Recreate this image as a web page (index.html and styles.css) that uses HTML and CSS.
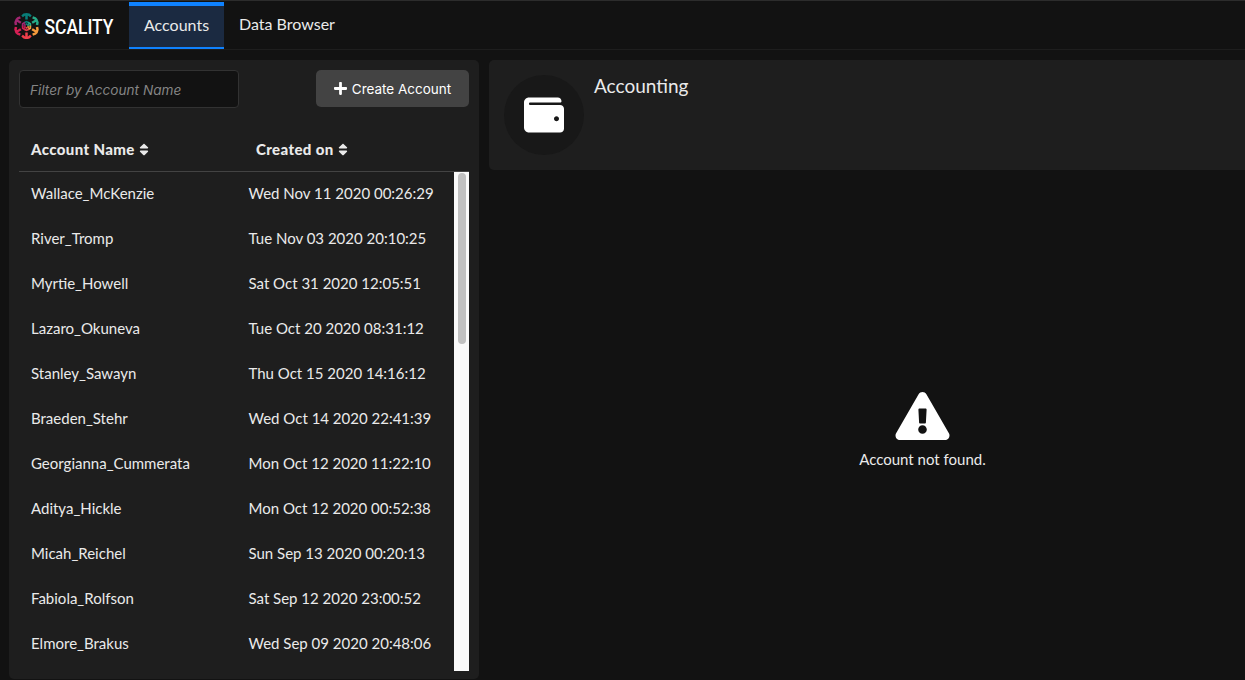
FILE: index.html
```
<!DOCTYPE html>
<html lang="en">
<head>
<meta charset="utf-8">
<title>Scality - Accounts</title>
<link rel="stylesheet" href="styles.css">
</head>
<body>
<svg class="defs" aria-hidden="true">
  <symbol id="sort" viewBox="0 0 320 512"><path d="M41 288h238c21.400 0 32.100 25.900 17 41L177 448c-9.400 9.400-24.600 9.400-33.900 0L24 329c-15.100-15.100-4.400-41 17-41zm255-105L177 64c-9.400-9.400-24.600-9.400-33.900 0L24 183c-15.100 15.100-4.400 41 17 41h238c21.400 0 32.100-25.900 17-41z"/></symbol>
  <symbol id="spoke" viewBox="-14 -14 28 28" overflow="visible"><path d="M-4.400-9.600L-2.400-11.300Q0-12.300 2.400-11.300L4.400-9.600M0-12V-6.500" fill="none" stroke="currentColor" stroke-width="2.500"/><path d="M-2.300-3.200L0-4.400 2.300-3.200M0-2.800V-1" fill="none" stroke="currentColor" stroke-width="1.700"/></symbol>
</svg>
<header class="navbar">
  <div class="brand">
    <svg class="logo" width="27" height="28" viewBox="0 0 27 28">
      <g transform="translate(13.500 14)">
        <use class="teal" href="#spoke" x="-14" y="-14" width="28" height="28"/>
        <use class="green" href="#spoke" x="-14" y="-14" width="28" height="28" transform="rotate(60)"/>
        <use class="orange" href="#spoke" x="-14" y="-14" width="28" height="28" transform="rotate(120)"/>
        <use class="red" href="#spoke" x="-14" y="-14" width="28" height="28" transform="rotate(180)"/>
        <use class="crimson" href="#spoke" x="-14" y="-14" width="28" height="28" transform="rotate(240)"/>
        <use class="purple" href="#spoke" x="-14" y="-14" width="28" height="28" transform="rotate(300)"/>
      </g>
    </svg>
    <svg class="wordmark" width="74" height="28" viewBox="0 0 74 28"><text x="1.500" y="21.500" textLength="69" lengthAdjust="spacingAndGlyphs">SCALITY</text></svg>
  </div>
  <nav class="tabs">
    <a class="tab active">Accounts</a>
    <a class="tab">Data Browser</a>
  </nav>
</header>
<main class="content">
  <section class="accounts">
    <div class="toolbar">
      <input class="filter" type="text" placeholder="Filter by Account Name">
      <button class="create"><svg width="13" height="15" viewBox="0 0 448 512"><path d="M416 208H272V64c0-17.670-14.330-32-32-32h-32c-17.670 0-32 14.330-32 32v144H32c-17.670 0-32 14.330-32 32v32c0 17.670 14.330 32 32 32h144v144c0 17.670 14.330 32 32 32h32c17.670 0 32-14.330 32-32V304h144c17.670 0 32-14.330 32-32v-32c0-17.670-14.330-32-32-32z"/></svg><span>Create Account</span></button>
    </div>
    <div class="table-head">
      <div class="heading">Account Name <svg class="sort"><use href="#sort"/></svg></div>
      <div class="heading">Created on <svg class="sort"><use href="#sort"/></svg></div>
    </div>
    <div class="table-body">
      <div class="rows">
        <div class="row"><span>Wallace_McKenzie</span><span>Wed Nov 11 2020 00:26:29</span></div>
        <div class="row"><span>River_Tromp</span><span>Tue Nov 03 2020 20:10:25</span></div>
        <div class="row"><span>Myrtie_Howell</span><span>Sat Oct 31 2020 12:05:51</span></div>
        <div class="row"><span>Lazaro_Okuneva</span><span>Tue Oct 20 2020 08:31:12</span></div>
        <div class="row"><span>Stanley_Sawayn</span><span>Thu Oct 15 2020 14:16:12</span></div>
        <div class="row"><span>Braeden_Stehr</span><span>Wed Oct 14 2020 22:41:39</span></div>
        <div class="row"><span>Georgianna_Cummerata</span><span>Mon Oct 12 2020 11:22:10</span></div>
        <div class="row"><span>Aditya_Hickle</span><span>Mon Oct 12 2020 00:52:38</span></div>
        <div class="row"><span>Micah_Reichel</span><span>Sun Sep 13 2020 00:20:13</span></div>
        <div class="row"><span>Fabiola_Rolfson</span><span>Sat Sep 12 2020 23:00:52</span></div>
        <div class="row"><span>Elmore_Brakus</span><span>Wed Sep 09 2020 20:48:06</span></div>
      </div>
      <div class="scrollbar"><div class="thumb"></div></div>
    </div>
  </section>
  <section class="detail">
    <div class="detail-head">
      <div class="avatar"><svg width="40" height="40" viewBox="0 0 512 512"><path d="M461.200 128H80c-8.840 0-16-7.160-16-16s7.160-16 16-16h384c8.840 0 16-7.160 16-16 0-26.510-21.490-48-48-48H64C28.650 32 0 60.650 0 96v320c0 35.350 28.650 64 64 64h397.200c28.020 0 50.800-21.530 50.800-48V176c0-26.470-22.780-48-50.800-48zM416 336c-17.670 0-32-14.330-32-32s14.330-32 32-32 32 14.330 32 32-14.330 32-32 32z"/></svg></div>
      <h1 class="title">Accounting</h1>
    </div>
    <div class="empty">
      <svg width="55" height="48" viewBox="0 0 576 512"><path d="M569.517 440.013C587.975 472.007 564.806 512 527.940 512H48.054c-36.937 0-59.999-40.055-41.577-71.987L246.423 23.985c18.467-32.009 64.720-31.951 83.154 0l239.940 416.028zM288 354c-25.405 0-46 20.595-46 46s20.595 46 46 46 46-20.595 46-46-20.595-46-46-46zm-43.673-165.346l7.418 136c.347 6.364 5.609 11.346 11.982 11.346h48.546c6.373 0 11.635-4.982 11.982-11.346l7.418-136c.375-6.874-5.098-12.654-11.982-12.654h-63.383c-6.884 0-12.356 5.780-11.981 12.654z"/></svg>
      <p class="message">Account not found.</p>
    </div>
  </section>
</main>
</body>
</html>
```
FILE: styles.css
```
* { box-sizing: border-box; }
body {
  margin: 0;
  height: 680px;
  overflow: hidden;
  display: flex;
  flex-direction: column;
  background: #121212;
  color: #eaeaea;
  font: 15px/20px Lato, sans-serif;
}
svg { fill: currentColor; flex: none; }
.defs { display: none; }

.navbar {
  flex: none;
  display: flex;
  height: 50px;
  border-top: 1px solid #2c2c2c;
  border-bottom: 1px solid #1e1e1e;
}
.brand { display: flex; gap: 3px; width: 129px; padding: 11px 0 0 13px; }
.wordmark { overflow: visible; font: 500 19.500px Roboto, sans-serif; fill: #fff; }
.teal { color: #087d78; }
.green { color: #26aa88; }
.orange { color: #f59a3c; }
.red { color: #ef3f4b; }
.crimson { color: #d51f54; }
.purple { color: #a12670; }
.tabs { display: flex; font-size: 16px; }
.tab { padding: 13px 15px 0; }
.tab.active {
  width: 95px;
  height: 47px;
  margin-top: 1px;
  padding-top: 9px;
  background: #1b2a41;
  border-top: 4px solid #0f82ff;
  border-bottom: 2px solid #0f82ff;
}

.content { flex: 1; display: flex; gap: 10px; padding: 10px 0 0 9px; }
.accounts {
  width: 470px;
  height: 619px;
  padding: 10px;
  background: #1e1e1e;
  border-radius: 5px;
}
.toolbar { display: flex; justify-content: space-between; }
.filter {
  width: 220px;
  height: 38px;
  padding: 2px 10px 0;
  background: #121212;
  border: 1px solid #323232;
  border-radius: 4px;
  color: #eaeaea;
  font: 13.600px Inter, sans-serif;
}
.filter::placeholder { color: #858585; font-style: italic; }
.create {
  display: flex;
  align-items: center;
  justify-content: center;
  gap: 5px;
  width: 153px;
  height: 37px;
  padding: 0;
  border: 0;
  border-radius: 5px;
  background: #434343;
  color: #fff;
  font: 13.500px Inter, sans-serif;
}
.table-head {
  display: grid;
  grid-template-columns: 225px 1fr;
  height: 64px;
  padding: 31px 12px 0;
  border-bottom: 1px solid #434343;
  font-weight: 900;
  letter-spacing: 0.380px;
}
.heading { display: flex; align-items: center; gap: 4px; height: 20px; }
.sort { width: 10px; height: 15px; }
.table-body { display: flex; height: 499px; }
.rows { flex: 1; overflow: hidden; }
.row {
  display: grid;
  grid-template-columns: 217.500px 1fr;
  height: 45px;
  padding: 11px 0 0 12px;
  white-space: nowrap;
}
.scrollbar { width: 15px; padding: 1px 3px 0 4px; background: #fafafa; }
.thumb { height: 171px; border-radius: 4px; background: #c1c1c1; }

.detail { flex: 1; display: flex; flex-direction: column; }
.detail-head {
  display: flex;
  gap: 10px;
  height: 110px;
  padding: 15px;
  background: #1e1e1e;
  border-radius: 5px 0 0 5px;
}
.avatar {
  display: grid;
  place-items: center;
  width: 80px;
  height: 80px;
  border-radius: 50%;
  background: #181818;
  color: #fff;
}
.title { margin: 0; font-size: 19px; line-height: 22px; font-weight: 400; }
.empty {
  display: flex;
  flex-direction: column;
  align-items: center;
  padding: 222px 0 0 111px;
  color: #fff;
}
.message { margin: 9px 0 0; color: #eaeaea; }
```
